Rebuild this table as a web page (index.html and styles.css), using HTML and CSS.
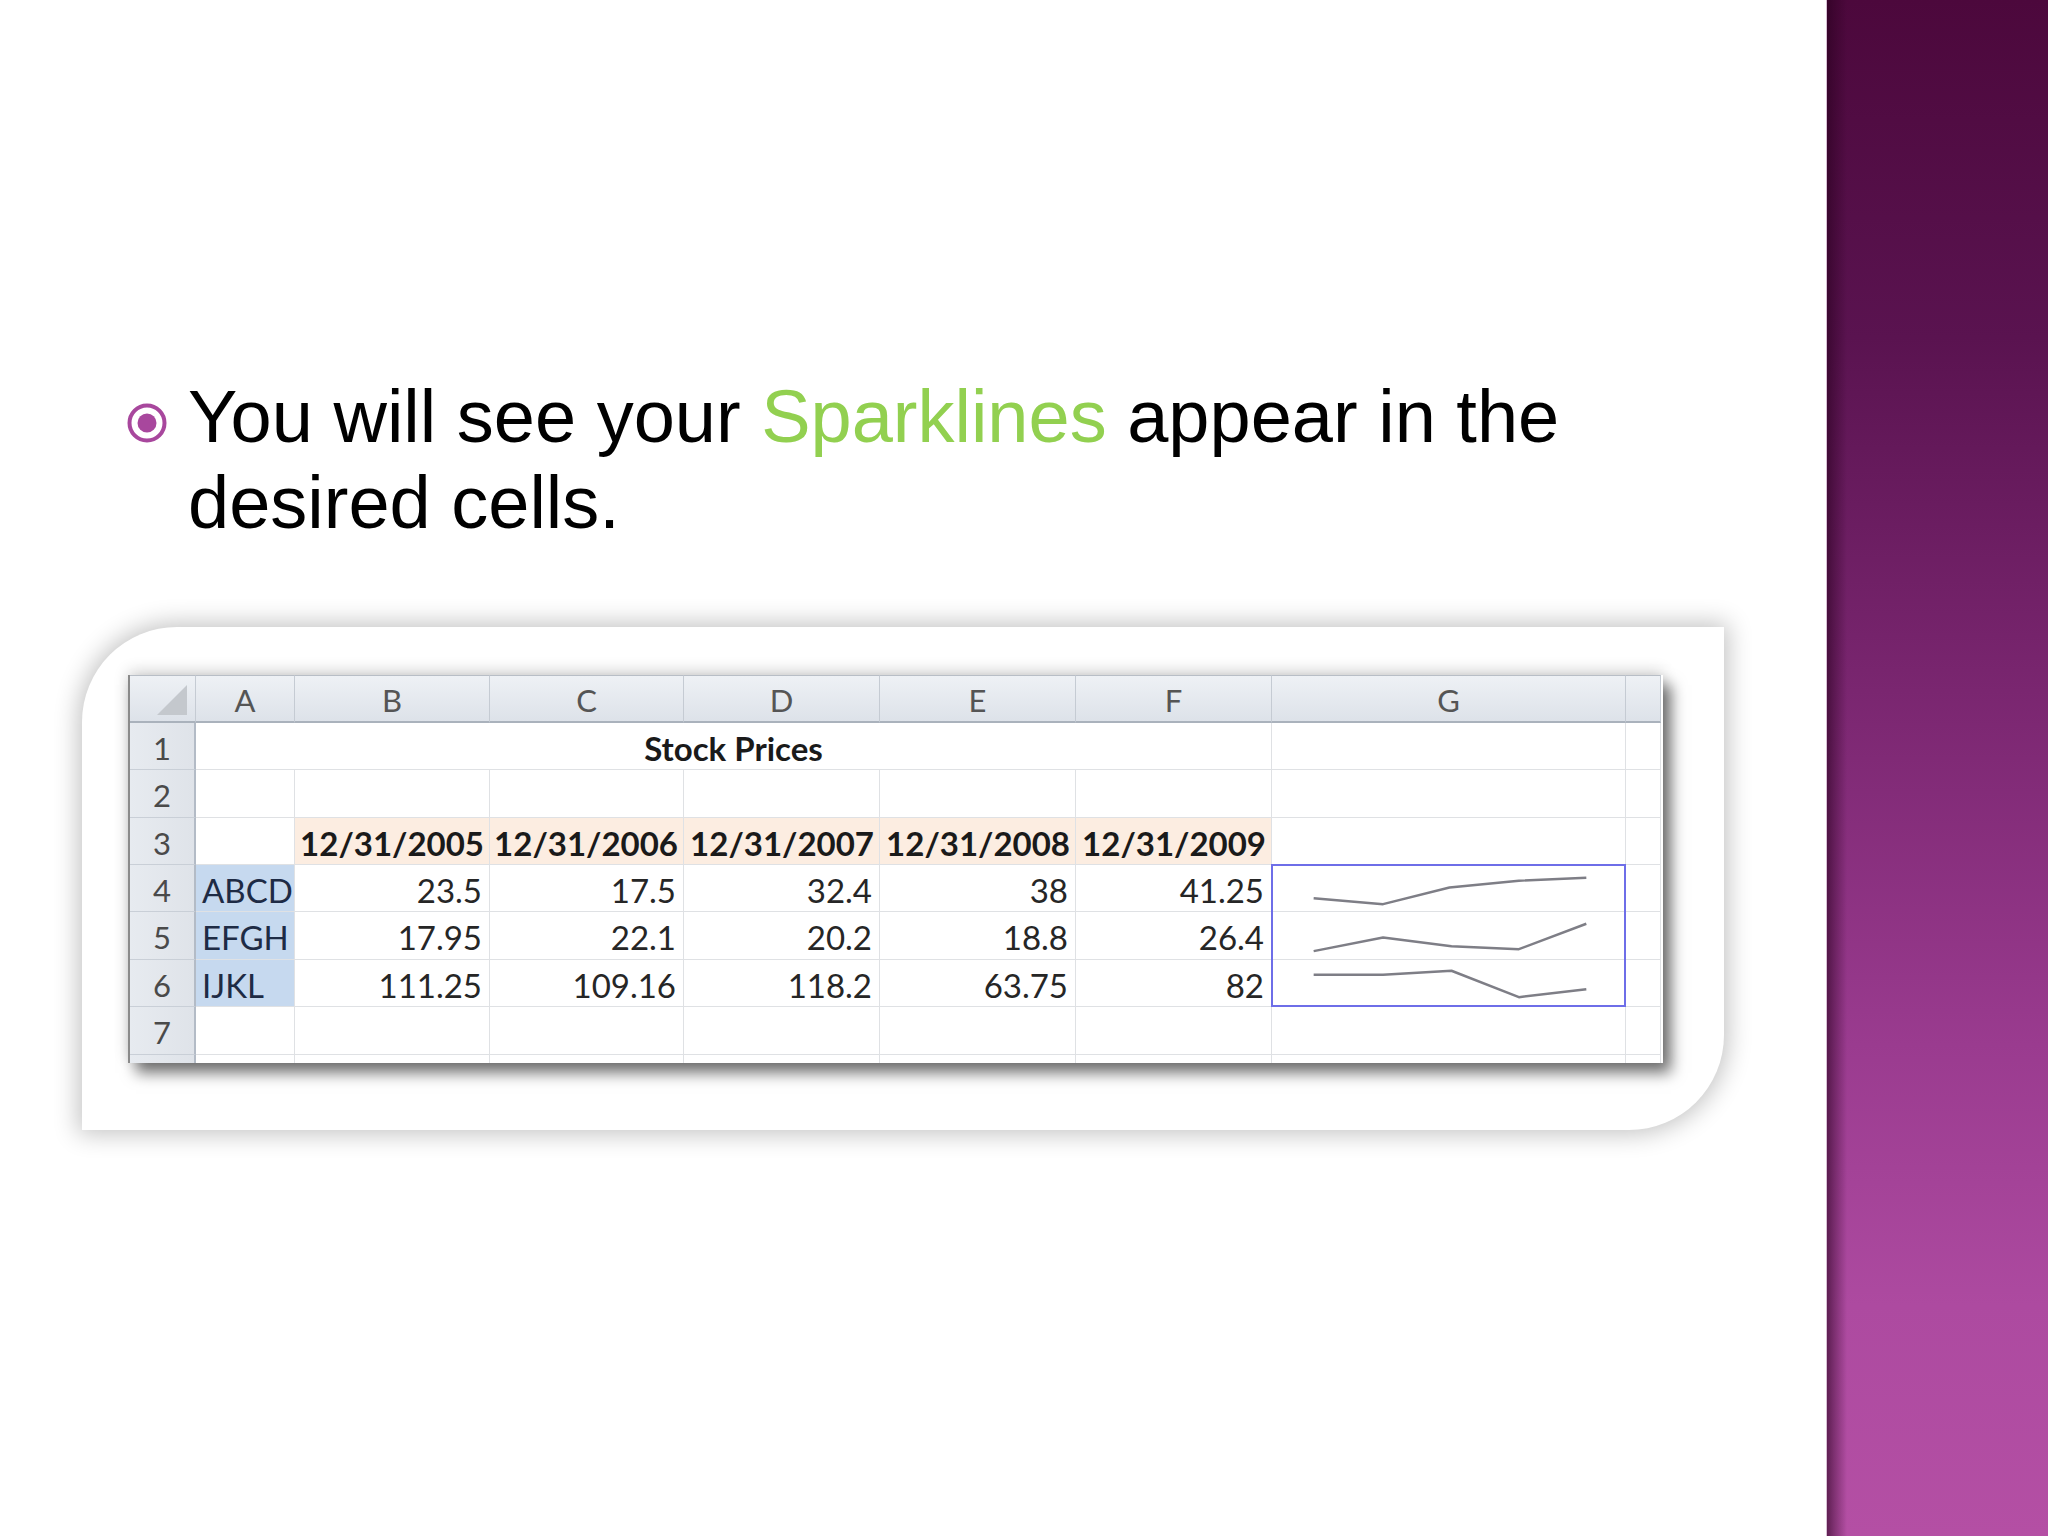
FILE: index.html
```html
<!DOCTYPE html>
<html>
<head>
<meta charset="utf-8">
<title>Sparklines</title>
<link rel="stylesheet" href="styles.css">
</head>
<body>
<div class="slide">
  <div class="main">
    <div class="bullet-row">
      <svg class="bullet" viewBox="0 0 40 40"><circle cx="20" cy="20" r="17.5" fill="none" stroke="#a8479d" stroke-width="4"/><circle cx="20" cy="20" r="9.5" fill="#a8479d"/></svg>
      <p class="text"><span>You will see your </span><span class="hl">Sparklines</span><span> appear in the </span><span>desired cells.</span></p>
    </div>
    <div class="frame">
      <div class="sheet">
        <div class="ch corner"><svg class="tri" viewBox="0 0 30 30"><polygon points="0,30 30,30 30,0" fill="#c4c8cd"/></svg></div>
        <div class="ch">A</div><div class="ch">B</div><div class="ch">C</div><div class="ch">D</div><div class="ch">E</div><div class="ch">F</div><div class="ch">G</div><div class="ch last"></div>

        <div class="rh">1</div><div class="c merged">Stock Prices</div><div class="c"></div><div class="c"></div>

        <div class="rh">2</div><div class="c"></div><div class="c"></div><div class="c"></div><div class="c"></div><div class="c"></div><div class="c"></div><div class="c"></div><div class="c"></div>

        <div class="rh">3</div><div class="c"></div><div class="c date">12/31/2005</div><div class="c date">12/31/2006</div><div class="c date">12/31/2007</div><div class="c date">12/31/2008</div><div class="c date">12/31/2009</div><div class="c"></div><div class="c"></div>

        <div class="rh">4</div><div class="c name">ABCD</div><div class="c num">23.5</div><div class="c num">17.5</div><div class="c num">32.4</div><div class="c num">38</div><div class="c num">41.25</div><div class="c"></div>

        <div class="rh">5</div><div class="c name">EFGH</div><div class="c num">17.95</div><div class="c num">22.1</div><div class="c num">20.2</div><div class="c num">18.8</div><div class="c num">26.4</div><div class="c"></div>

        <div class="rh">6</div><div class="c name">IJKL</div><div class="c num">111.25</div><div class="c num">109.16</div><div class="c num">118.2</div><div class="c num">63.75</div><div class="c num">82</div><div class="c"></div>

        <div class="rh">7</div><div class="c"></div><div class="c"></div><div class="c"></div><div class="c"></div><div class="c"></div><div class="c"></div><div class="c"></div><div class="c"></div>

        <div class="rh cut"></div><div class="c cut"></div><div class="c cut"></div><div class="c cut"></div><div class="c cut"></div><div class="c cut"></div><div class="c cut"></div><div class="c cut"></div><div class="c cut"></div>

        <div class="c g4"></div><div class="c g5"></div><div class="c g6"></div>
        <div class="sel">
          <svg class="spark" viewBox="0 0 354 142" preserveAspectRatio="none">
            <polyline points="41,33 111,39 178,22 248,15 316,12" />
            <polyline points="41,87 111,73 180,82 248,85 316,59" />
            <polyline points="41,111 111,111 180,107 248,134 316,126" />
          </svg>
        </div>
      </div>
    </div>
  </div>
  <div class="side"></div>
</div>
</body>
</html>
```

FILE: styles.css
```css
html, body {
  margin: 0;
  padding: 0;
}
body {
  width: 2048px;
  height: 1536px;
  overflow: hidden;
  background: #ffffff;
}
.slide {
  display: flex;
  width: 2048px;
  height: 1536px;
}
.main {
  width: 1826px;
  flex: none;
  background: #ffffff;
}
.bullet-row {
  display: flex;
  align-items: flex-start;
  margin: 374px 0 0 127px;
}
.bullet {
  width: 40px;
  height: 40px;
  margin-top: 29px;
  flex: none;
}
.text {
  margin: 0 0 0 21px;
  width: 1430px;
  font-family: "Liberation Sans", Arial, sans-serif;
  font-size: 74px;
  line-height: 86px;
  color: #000000;
}
.hl {
  color: #92d050;
}
.frame {
  margin: 81px 0 0 82px;
  width: 1642px;
  height: 503px;
  box-sizing: border-box;
  padding: 48px 0 0 46px;
  background: #ffffff;
  border-radius: 95px 0 95px 0;
  box-shadow: 0 0 24px 4px rgba(0, 0, 0, 0.24);
}
.sheet {
  display: grid;
  grid-template-columns: 66px 99px 195px 194px 196px 196px 196px 354px 35px;
  grid-template-rows: 48px 47px 48px 47px 47px 48px 47px 48px 8px;
  width: 1533px;
  border-left: 2px solid #8a8a8a;
  background: #ffffff;
  box-shadow: 8px 10px 14px rgba(0, 0, 0, 0.55), 0 -4px 14px rgba(0, 0, 0, 0.16);
  font-family: Lato, "Liberation Sans", sans-serif;
  font-size: 33px;
  color: #262626;
}
.ch {
  box-sizing: border-box;
  display: flex;
  align-items: center;
  justify-content: center;
  padding-top: 2px;
  background: linear-gradient(#eef1f5, #dde2e9);
  border-right: 1px solid #c5cbd3;
  border-bottom: 2px solid #aab2bc;
  border-top: 1px solid #b8bec6;
  color: #555555;
  font-size: 31px;
}
.corner {
  justify-content: flex-end;
  align-items: flex-end;
  padding: 0 8px 6px 0;
}
.tri {
  width: 30px;
  height: 30px;
}
.rh {
  box-sizing: border-box;
  display: flex;
  align-items: center;
  justify-content: center;
  padding-top: 3px;
  background: linear-gradient(to right, #e7ebf0, #dfe3e9);
  border-right: 2px solid #b3bbc6;
  border-bottom: 1px solid #c9cfd7;
  color: #4a4a4a;
  font-size: 31px;
}
.c {
  box-sizing: border-box;
  display: flex;
  align-items: center;
  padding: 3px 7px 0 6px;
  border-right: 1px solid #dfe1e4;
  border-bottom: 1px solid #dfe1e4;
  white-space: nowrap;
  overflow: visible;
}
.merged {
  grid-column: span 6;
  justify-content: center;
  font-weight: 700;
  color: #1a1a1a;
  padding-left: 0;
  padding-right: 0;
}
.date {
  justify-content: flex-end;
  background: #fcede1;
  font-weight: 700;
  color: #1a1a1a;
  padding-right: 5px;
}
.num {
  justify-content: flex-end;
}
.name {
  background: #c6d9ef;
  color: #1e2b45;
}
.cut {
  border-bottom: none;
}
.g4 {
  grid-column: 8;
  grid-row: 5;
}
.g5 {
  grid-column: 8;
  grid-row: 6;
}
.g6 {
  grid-column: 8;
  grid-row: 7;
}
.sel {
  grid-column: 8;
  grid-row: 5 / 8;
  margin: -1px 0 0 -1px;
  border: 2px solid #6e6ee8;
  box-sizing: border-box;
  height: calc(100% + 1px);
}
.spark {
  display: block;
  width: 100%;
  height: 100%;
}
.spark polyline {
  fill: none;
  stroke: #7e7e86;
  stroke-width: 2.5;
  stroke-linejoin: round;
}
.side {
  flex: 1;
  border-left: 1px solid #d8bfd4;
  background:
    linear-gradient(to right, rgba(40, 0, 30, 0.6) 0, rgba(40, 0, 30, 0.35) 8px, rgba(40, 0, 30, 0) 20px),
    linear-gradient(#4c083c 0%, #5a1350 22%, #7a2670 45%, #9a3b8f 68%, #ad4aa0 85%, #b44fa4 100%);
}
```
